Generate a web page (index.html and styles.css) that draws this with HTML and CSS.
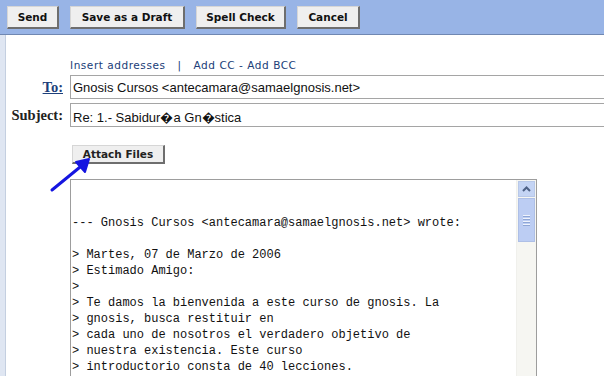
FILE: index.html
```html
<!DOCTYPE html>
<html>
<head>
<meta charset="utf-8">
<link rel="stylesheet" href="styles.css">
</head>
<body>
<div class="toolbar">
  <button class="tbtn btn-send">Send</button>
  <button class="tbtn btn-draft">Save as a Draft</button>
  <button class="tbtn btn-spell">Spell Check</button>
  <button class="tbtn btn-cancel">Cancel</button>
</div>
<div class="main">
  <div class="strip"></div>
  <div class="content">
    <div class="links"><span>Insert addresses</span><span class="sep">|</span><span>Add CC - Add BCC</span></div>
    <div class="row">
      <label class="lbl lbl-link">To:</label>
      <div class="field">Gnosis Cursos &lt;antecamara@samaelgnosis.net&gt;</div>
    </div>
    <div class="row">
      <label class="lbl">Subject:</label>
      <div class="field">Re: 1.- Sabidur�a Gn�stica</div>
    </div>
    <div class="attach-row"><button class="attach">Attach Files</button></div>
    <div class="body-box">
      <pre class="body-text">


--- Gnosis Cursos &lt;antecamara@samaelgnosis.net&gt; wrote:

&gt; Martes, 07 de Marzo de 2006
&gt; Estimado Amigo:
&gt;
&gt; Te damos la bienvenida a este curso de gnosis. La
&gt; gnosis, busca restituir en
&gt; cada uno de nosotros el verdadero objetivo de
&gt; nuestra existencia. Este curso
&gt; introductorio consta de 40 lecciones.</pre>
      <div class="scrollbar">
        <div class="sb-up"><svg width="9" height="6" viewBox="0 0 9 6"><path d="M1 5 L4.5 1.5 L8 5" fill="none" stroke="#4d6185" stroke-width="2"/></svg></div>
        <div class="sb-thumb"><span></span><span></span><span></span><span></span></div>
      </div>
    </div>
  </div>
</div>
<svg class="arrow" width="50" height="40" viewBox="0 0 50 40">
  <path d="M3 35 L36 8" stroke="#1515e0" stroke-width="3" stroke-linecap="round" fill="none"/>
  <path d="M27 7 L40 4 L36 17 Z" stroke="#1515e0" stroke-width="2" fill="#1515e0" stroke-linejoin="round"/>
</svg>
</body>
</html>
```
FILE: styles.css
```css
html, body {
  margin: 0;
  padding: 0;
  background: #ffffff;
  width: 604px;
  height: 376px;
  overflow: hidden;
  position: relative;
  font-family: "DejaVu Sans", Verdana, sans-serif;
}
.toolbar {
  height: 35px;
  box-sizing: border-box;
  background: #98b4e6;
  border-bottom: 1px solid #7088b2;
  padding: 6px 0 0 7px;
  display: flex;
  gap: 11px;
  align-items: flex-start;
}
.tbtn {
  height: 23px;
  box-sizing: border-box;
  background: #efefef;
  border: 1px solid #d6d6d6;
  border-right: 2px solid #6e6e6e;
  border-bottom: 2px solid #6e6e6e;
  font-family: "DejaVu Sans", Verdana, sans-serif;
  font-weight: bold;
  font-size: 10.5px;
  color: #111;
  padding: 0;
  margin: 0;
}
.btn-send { width: 52px; }
.btn-draft { width: 115px; }
.btn-spell { width: 90px; }
.btn-cancel { width: 63px; }
.main {
  display: flex;
  height: 341px;
}
.strip {
  width: 5px;
  background: #dfe6f2;
  border-right: 1px solid #c4cfe0;
  flex: none;
}
.content {
  flex: 1;
  overflow: hidden;
}
.links {
  margin: 24px 0 0 64px;
  height: 14px;
  font-size: 10.5px;
  color: #203d78;
  letter-spacing: 0.55px;
  display: flex;
}
.links .sep { margin: 0 12px; }
.row {
  display: flex;
  align-items: center;
  height: 24px;
  margin-top: 2px;
}
.row + .row { margin-top: 4px; }
.lbl {
  width: 57px;
  text-align: right;
  font-family: "Liberation Serif", "Times New Roman", serif;
  font-weight: bold;
  font-size: 14.5px;
  color: #222;
  padding-right: 7px;
  flex: none;
}
.lbl-link {
  color: #1d3f7a;
  text-decoration: underline;
}
.field {
  height: 24px;
  box-sizing: border-box;
  width: 560px;
  flex: none;
  border: 1px solid #a5a5a5;
  border-right: none;
  font-family: "Liberation Sans", Arial, sans-serif;
  font-size: 13px;
  color: #111;
  padding: 4px 0 0 2px;
  white-space: nowrap;
}
.attach-row {
  margin: 16px 0 0 66px;
  height: 19px;
}
.attach {
  width: 93px;
  height: 19px;
  box-sizing: border-box;
  background: #efefef;
  border: 1px solid #d6d6d6;
  border-right: 2px solid #6e6e6e;
  border-bottom: 2px solid #6e6e6e;
  font-family: "DejaVu Sans", Verdana, sans-serif;
  font-weight: bold;
  font-size: 10.5px;
  color: #222;
  padding: 0;
  margin: 0;
}
.body-box {
  margin: 17px 0 0 64px;
  width: 467px;
  height: 220px;
  box-sizing: border-box;
  border: 1px solid #9d9d9d;
  border-bottom: none;
  position: relative;
  display: flex;
}
.body-text {
  margin: 0;
  flex: 1;
  padding: 3px 0 0 1px;
  font-family: "Liberation Mono", "Courier New", monospace;
  font-size: 12px;
  line-height: 16px;
  color: #111;
}
.scrollbar {
  width: 19px;
  flex: none;
  background: #f6f6f2;
  border-left: 1px solid #f0f0ec;
  display: flex;
  flex-direction: column;
  align-items: center;
  padding-top: 1px;
}
.sb-up {
  width: 17px;
  height: 16px;
  box-sizing: border-box;
  background: #c4d4f4;
  border: 1px solid #b8c8e8;
  display: flex;
  align-items: center;
  justify-content: center;
}
.sb-thumb {
  margin-top: 1px;
  width: 17px;
  height: 44px;
  box-sizing: border-box;
  background: #bccdf3;
  border: 1px solid #aebfe6;
  display: flex;
  flex-direction: column;
  align-items: center;
  justify-content: center;
  gap: 1px;
}
.sb-thumb span {
  width: 7px;
  height: 1px;
  background: #eef3fc;
  border-bottom: 1px solid #8ea6d6;
}
.arrow {
  position: absolute;
  left: 49px;
  top: 155px;
}
```
